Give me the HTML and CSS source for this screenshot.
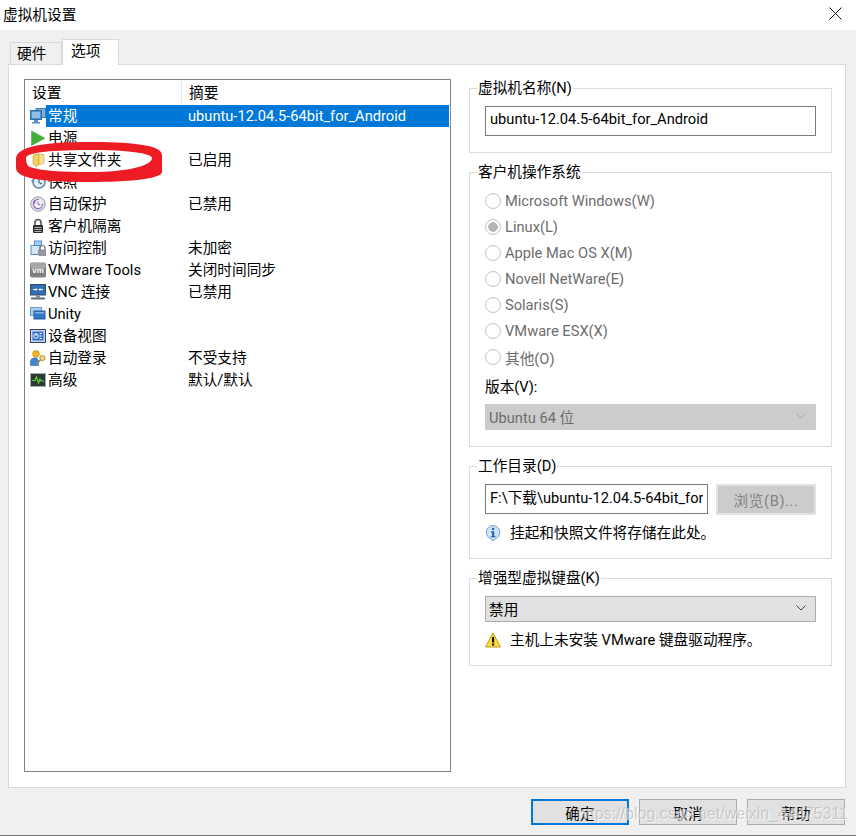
FILE: index.html
```html
<!doctype html>
<html>
    <head>
        <meta charset="utf-8" />
        <title>虚拟机设置</title>
        <link rel="stylesheet" href="styles.css">
    </head>
    <body>
        <div class="window">
            <header class="titlebar">
                <span>虚拟机设置</span>
                <svg class="close-icon" width="13" height="13" viewBox="0 0 13 13">
                    <path d="M0.5 0.5L12.5 12.5M12.5 0.5L0.5 12.5" stroke="#111" stroke-width="1" fill="none" />
                </svg>
            </header>

            <nav class="tabs">
                <div class="tab">硬件</div>
                <div class="tab tab-active">选项</div>
            </nav>

            <main class="pane">
                <!-- Settings list -->
                <section class="settings-list">
                    <div class="list-header">
                        <div class="col-name">设置</div>
                        <div class="col-summary">摘要</div>
                    </div>

                    <div class="row">
                        <svg class="icon" viewBox="0 0 16 16">
                            <rect x="6" y="0.5" width="9.5" height="9" fill="#7fb0dc" stroke="#3f78b0" />
                            <rect x="0.5" y="2.5" width="11" height="9" fill="#4f93d2" stroke="#2f6aa5" />
                            <rect x="2" y="4" width="8" height="6" fill="#8cc0ea" />
                            <path d="M4 12h4v2h2v1.5H2V14h2z" fill="#5b8fbf" />
                        </svg>
                        <div class="row-main is-selected">
                            <div class="cell-name">常规</div>
                            <div class="cell-summary">ubuntu-12.04.5-64bit_for_Android</div>
                        </div>
                    </div>
                    <div class="row">
                        <svg class="icon" viewBox="0 0 16 16">
                            <path d="M1.5 1V15.5L15 8.2z" fill="#3fb13a" stroke="#5f9f58" stroke-width="0.6" />
                        </svg>
                        <div class="row-main">
                            <div class="cell-name">电源</div>
                        </div>
                    </div>
                    <div class="row">
                        <svg class="icon" viewBox="0 0 16 16">
                            <path d="M3 3L9 1.5V12L6.5 15L3 12z" fill="#f3cf62" stroke="#c9a23c" stroke-width="0.6" />
                            <path d="M9 2.5H14V11L9 13z" fill="#fae08c" stroke="#c9a23c" stroke-width="0.6" />
                        </svg>
                        <div class="row-main">
                            <div class="cell-name">共享文件夹</div>
                            <div class="cell-summary">已启用</div>
                        </div>
                    </div>
                    <div class="row">
                        <svg class="icon" viewBox="0 0 16 16">
                            <path d="M1 7L6 2L6 12z" fill="#6f9cc4" />
                            <circle cx="9" cy="8" r="6" fill="#e3edf5" stroke="#5b7f9f" stroke-width="1.4" />
                            <path d="M9 4.5V8.5L12 10" stroke="#39658c" stroke-width="1.2" fill="none" />
                        </svg>
                        <div class="row-main">
                            <div class="cell-name">快照</div>
                        </div>
                    </div>
                    <div class="row">
                        <svg class="icon" viewBox="0 0 16 16">
                            <circle cx="8" cy="8" r="7.2" fill="#e6e4ea" stroke="#9a98a2" />
                            <circle cx="8" cy="8" r="4.6" fill="#f4f2f8" stroke="#8f6fc0" stroke-width="1.2" stroke-dasharray="22 6" />
                            <path d="M2.8 5.5L6 4.5L5 8z" fill="#8f6fc0" />
                            <path d="M8 5.5V8.5H10.5" stroke="#8f6fc0" fill="none" />
                        </svg>
                        <div class="row-main">
                            <div class="cell-name">自动保护</div>
                            <div class="cell-summary">已禁用</div>
                        </div>
                    </div>
                    <div class="row">
                        <svg class="icon" viewBox="0 0 16 16">
                            <path d="M5 7V4.5a3 3 0 0 1 6 0V7" fill="none" stroke="#555" stroke-width="1.6" />
                            <rect x="3" y="7" width="10" height="8" rx="1" fill="#2f2f2f" />
                            <path d="M4.5 9.5h7M4.5 11.5h7M4.5 13.5h7" stroke="#d8d8d8" stroke-width="0.8" />
                        </svg>
                        <div class="row-main">
                            <div class="cell-name">客户机隔离</div>
                        </div>
                    </div>
                    <div class="row">
                        <svg class="icon" viewBox="0 0 16 16">
                            <rect x="4.5" y="1" width="7" height="5" fill="#a9cdee" stroke="#4f8fc8" />
                            <rect x="1" y="5.5" width="9" height="9" fill="#d2e5f6" stroke="#4f8fc8" />
                            <path d="M10 10V8a2.5 2.5 0 0 1 5 0v2" fill="none" stroke="#777" stroke-width="1.2" />
                            <rect x="8.5" y="10" width="7.5" height="5.5" rx="0.5" fill="#9a9a9a" stroke="#666" stroke-width="0.5" />
                        </svg>
                        <div class="row-main">
                            <div class="cell-name">访问控制</div>
                            <div class="cell-summary">未加密</div>
                        </div>
                    </div>
                    <div class="row">
                        <svg class="icon" viewBox="0 0 16 16">
                            <rect x="0" y="0.5" width="16" height="15" rx="2" fill="#808080" />
                            <rect x="0.5" y="1" width="15" height="6" rx="2" fill="#a8a8a8" />
                            <text class="vm-glyph" x="8" y="11" text-anchor="middle">vm</text>
                        </svg>
                        <div class="row-main">
                            <div class="cell-name">VMware Tools</div>
                            <div class="cell-summary">关闭时间同步</div>
                        </div>
                    </div>
                    <div class="row">
                        <svg class="icon" viewBox="0 0 16 16">
                            <rect x="0.5" y="0.5" width="15" height="10.5" fill="#2f6fb8" stroke="#3a4a60" />
                            <path d="M3 5.5H7M9 5.5H13" stroke="#fff" />
                            <path d="M5.5 4L7 5.5L5.5 7M10.5 4L9 5.5L10.5 7" stroke="#fff" fill="none" stroke-width="0.7" />
                            <path d="M6 11.5h4v2H6z" fill="#7f8a99" />
                            <path d="M1 13.5h14v2H1z" fill="#5a6c84" />
                        </svg>
                        <div class="row-main">
                            <div class="cell-name">VNC 连接</div>
                            <div class="cell-summary">已禁用</div>
                        </div>
                    </div>
                    <div class="row">
                        <svg class="icon" viewBox="0 0 16 16">
                            <rect x="0.5" y="1.5" width="11" height="8" fill="#a9cdee" stroke="#6f9cc4" />
                            <rect x="4" y="5" width="11" height="8" fill="#2f78c8" stroke="#2a5f9f" />
                            <rect x="5" y="6" width="9" height="1.5" fill="#7fb5ea" />
                        </svg>
                        <div class="row-main">
                            <div class="cell-name">Unity</div>
                        </div>
                    </div>
                    <div class="row">
                        <svg class="icon" viewBox="0 0 16 16">
                            <rect x="0.5" y="1.5" width="15" height="13" fill="#cfd8e6" stroke="#33415c" />
                            <rect x="2.5" y="3.5" width="11" height="9" fill="#2f6fd0" />
                            <circle cx="6" cy="8" r="2.3" fill="none" stroke="#fff" />
                            <path d="M6 5.5V8M9.5 5.5H12M9.5 8H12M9.5 10.5H12" stroke="#fff" />
                        </svg>
                        <div class="row-main">
                            <div class="cell-name">设备视图</div>
                        </div>
                    </div>
                    <div class="row">
                        <svg class="icon" viewBox="0 0 16 16">
                            <circle cx="6" cy="4" r="3.4" fill="#f2b31e" stroke="#c08a12" stroke-width="0.6" />
                            <path d="M0.5 15.5V11a4 4 0 0 1 4-3h2l2 2.5V15.5z" fill="#3f86d6" stroke="#2a5f9f" stroke-width="0.6" />
                            <circle cx="12.5" cy="8" r="2.6" fill="#f0d78c" stroke="#a88a3c" />
                            <path d="M10.5 10L6.5 14" stroke="#a88a3c" stroke-width="1.6" />
                        </svg>
                        <div class="row-main">
                            <div class="cell-name">自动登录</div>
                            <div class="cell-summary">不受支持</div>
                        </div>
                    </div>
                    <div class="row">
                        <svg class="icon" viewBox="0 0 16 16">
                            <rect x="0.5" y="1.5" width="15" height="13" fill="#2c3a33" stroke="#9fb0b8" />
                            <path d="M2 8.5H5L6.5 5L8.5 11L10 7L11 9H14" fill="none" stroke="#63d23a" stroke-width="1.2" />
                        </svg>
                        <div class="row-main">
                            <div class="cell-name">高级</div>
                            <div class="cell-summary">默认/默认</div>
                        </div>
                    </div>
                </section>

                <!-- Right side options -->
                <section class="options">
                    <fieldset class="group group-name">
                        <legend>虚拟机名称(N)</legend>
                        <input class="text-input" type="text" value="ubuntu-12.04.5-64bit_for_Android" />
                    </fieldset>

                    <fieldset class="group group-os">
                        <legend>客户机操作系统</legend>
                        <div class="radio-list">
                            <label class="radio-row"><input type="radio" name="os" disabled />Microsoft Windows(W)</label>
                            <label class="radio-row"><input type="radio" name="os" checked disabled />Linux(L)</label>
                            <label class="radio-row"><input type="radio" name="os" disabled />Apple Mac OS X(M)</label>
                            <label class="radio-row"><input type="radio" name="os" disabled />Novell NetWare(E)</label>
                            <label class="radio-row"><input type="radio" name="os" disabled />Solaris(S)</label>
                            <label class="radio-row"><input type="radio" name="os" disabled />VMware ESX(X)</label>
                            <label class="radio-row"><input type="radio" name="os" disabled />其他(O)</label>
                        </div>
                        <div class="field-label">版本(V):</div>
                        <div class="select select-disabled">
                            <span>Ubuntu 64 位</span>
                            <svg width="10" height="6" viewBox="0 0 10 6">
                                <path d="M0.5 0.5L5 5L9.5 0.5" fill="none" stroke="#a8a8a8" />
                            </svg>
                        </div>
                    </fieldset>

                    <fieldset class="group group-dir">
                        <legend>工作目录(D)</legend>
                        <div class="dir-row">
                            <input class="text-input" type="text" value="F:\下载\ubuntu-12.04.5-64bit_for_Android" />
                            <button class="browse-button" type="button" disabled>浏览(B)...</button>
                        </div>
                        <div class="note">
                            <svg class="note-icon" viewBox="0 0 16 16">
                                <path d="M8 0.5a6.8 6.8 0 0 1 2 13.3L8 16L6.5 13.9A6.8 6.8 0 0 1 8 0.5z" fill="#cfe3f5" stroke="#6f9fd0" />
                                <rect x="7" y="2.8" width="2.2" height="2.2" fill="#1f5fb0" />
                                <path d="M6 6.3H9.2V11H10.4V12.2H6V11H7.1V7.5H6z" fill="#1f5fb0" />
                            </svg>
                            <span>挂起和快照文件将存储在此处。</span>
                        </div>
                    </fieldset>

                    <fieldset class="group group-keyboard">
                        <legend>增强型虚拟键盘(K)</legend>
                        <div class="select">
                            <span>禁用</span>
                            <svg width="10" height="6" viewBox="0 0 10 6">
                                <path d="M0.5 0.5L5 5L9.5 0.5" fill="none" stroke="#444" />
                            </svg>
                        </div>
                        <div class="note">
                            <svg class="note-icon" viewBox="0 0 16 16">
                                <path d="M8 1L15.5 15H0.5z" fill="#fbdc3c" stroke="#b89a20" stroke-linejoin="round" />
                                <rect x="7" y="5" width="2.2" height="5.5" fill="#111" />
                                <rect x="7" y="11.5" width="2.2" height="2" fill="#111" />
                            </svg>
                            <span>主机上未安装 VMware 键盘驱动程序。</span>
                        </div>
                    </fieldset>
                </section>
            </main>

            <footer class="footer">
                <button class="button button-default" type="button">确定</button>
                <button class="button" type="button">取消</button>
                <button class="button" type="button">帮助</button>
            </footer>

            <!-- Red marker drawn over the screenshot -->
            <svg class="marker" width="146" height="41" viewBox="0 0 146 41">
                <path fill="#ed1c24" fill-rule="evenodd" d="M0 18C0 4 35 1 73 1C110 1 146 3 146 14L146 31C146 38 110 41 75 41C35 41 0 39 0 27ZM10 17C10 11 40 9 75 9C110 9 136 12 136 17C136 25 110 31 75 31C45 31 25 30 14 26C11 25 10 21 10 17Z" />
            </svg>

            <div class="watermark">https://blog.csdn.net/weixin_44475311</div>
        </div>
    </body>
</html>
```

FILE: styles.css
```css
body {
    margin: 0;
}

.window {
    position: relative;
    width: 856px;
    height: 836px;
    box-sizing: border-box;
    display: flex;
    flex-direction: column;
    overflow: hidden;
    background: #f0f0f0;
    border-bottom: 1px solid #777;
    color: #000;
    font-family: Roboto, "Noto Sans CJK SC", sans-serif;
    font-size: 14.67px;
}

.titlebar {
    height: 30px;
    flex: none;
    display: flex;
    align-items: center;
    justify-content: space-between;
    padding: 0 14px 3px 3px;
    box-sizing: border-box;
    background: #fff;
}

.tabs {
    height: 34px;
    flex: none;
    display: flex;
    align-items: flex-end;
    padding-left: 10px;
}

.tab {
    width: 52px;
    height: 22px;
    box-sizing: border-box;
    padding-left: 6px;
    border: 1px solid #d9d9d9;
    border-bottom: none;
    line-height: 22px;
}

.tab-active {
    position: relative;
    width: 57px;
    height: 26px;
    margin-bottom: -1px;
    padding-left: 8px;
    background: #fff;
    line-height: 22px;
}

.pane {
    width: 838px;
    height: 724px;
    flex: none;
    box-sizing: border-box;
    margin-left: 8px;
    padding: 14px 13px 0 15px;
    display: flex;
    gap: 18px;
    background: #fff;
    border: 1px solid #d9d9d9;
}

.settings-list {
    width: 427px;
    height: 693px;
    flex: none;
    box-sizing: border-box;
    border: 1px solid #82828a;
}

.list-header {
    height: 25px;
    display: flex;
    line-height: 26px;
}

.col-name {
    width: 157px;
    box-sizing: border-box;
    padding-left: 7px;
    border-right: 1px solid #e5e5e5;
}

.col-summary {
    padding-left: 7px;
}

.row {
    height: 22px;
    display: flex;
    align-items: center;
    padding-left: 5px;
}

.icon {
    width: 16px;
    height: 16px;
    flex: none;
}

.row-main {
    flex: 1;
    height: 22px;
    display: flex;
    margin-right: 1px;
    line-height: 22px;
}

.is-selected {
    background: #0078d7;
    color: #fff;
}

.cell-name {
    width: 142px;
    flex: none;
    box-sizing: border-box;
    padding-left: 2px;
}

.vm-glyph {
    fill: #fff;
    font-family: "Liberation Sans", sans-serif;
    font-size: 8px;
    font-weight: bold;
}

.options {
    width: 363px;
    flex: none;
    display: flex;
    flex-direction: column;
    gap: 10px;
}

.group {
    margin: 0;
    padding: 0 15px;
    min-width: 0;
    border: 1px solid #dcdcdc;
}

.group legend {
    height: 18px;
    margin-left: -8px;
    padding: 0 1px;
    line-height: 18px;
}

.group-name {
    padding-top: 9px;
    padding-bottom: 16px;
}

.group-os {
    padding-top: 7px;
    padding-bottom: 16px;
}

.group-dir {
    padding-top: 9px;
    padding-bottom: 15px;
}

.group-keyboard {
    padding-top: 9px;
    padding-bottom: 15px;
}

.text-input {
    width: 100%;
    height: 30px;
    box-sizing: border-box;
    margin: 0;
    padding: 0 4px 5px;
    border: 1px solid #7a7a7a;
    border-radius: 0;
    background: #fff;
    color: #000;
    font: inherit;
    outline: none;
}

.radio-row {
    height: 26px;
    display: flex;
    align-items: center;
    gap: 4px;
    color: #6d6d6d;
}

.radio-row input {
    appearance: none;
    width: 16px;
    height: 16px;
    box-sizing: border-box;
    flex: none;
    margin: 0;
    border: 1px solid #c4c4c4;
    border-radius: 50%;
    background: #fff;
}

.radio-row input:checked {
    background: radial-gradient(circle, #b4b4b4 0 4.5px, #fff 5px);
}

.field-label {
    height: 18px;
    margin-top: 8px;
    line-height: 18px;
}

.select {
    height: 26px;
    box-sizing: border-box;
    margin-top: 8px;
    display: flex;
    align-items: center;
    justify-content: space-between;
    padding: 0 9px 2px 3px;
    border: 1px solid #adadad;
    background: #e1e1e1;
}

.group-keyboard .select {
    margin-top: 0;
}

.select-disabled {
    border-color: #cccccc;
    background: #cccccc;
    color: #6d6d6d;
}

.dir-row {
    display: flex;
    gap: 8px;
}

.dir-row .text-input {
    width: 223px;
    flex: none;
}

.browse-button {
    width: 100px;
    height: 31px;
    box-sizing: border-box;
    margin: 0;
    padding: 0;
    border: 2px solid #e3e3e3;
    border-radius: 0;
    background: #cccccc;
    color: #838383;
    font: inherit;
    letter-spacing: 0.6px;
}

.note {
    height: 20px;
    margin-top: 8px;
    display: flex;
    align-items: center;
    gap: 9px;
    line-height: 20px;
}

.note-icon {
    width: 16px;
    height: 16px;
    flex: none;
}

.footer {
    display: flex;
    justify-content: flex-end;
    gap: 10px;
    padding: 11px 11px 0 0;
}

.button {
    width: 98px;
    height: 26px;
    box-sizing: border-box;
    margin: 0;
    padding: 0;
    border: 1px solid #adadad;
    border-radius: 0;
    background: #e1e1e1;
    color: #000;
    font: inherit;
}

.button-default {
    border: 2px solid #0078d7;
}

.marker {
    position: absolute;
    left: 16px;
    top: 141px;
}

.watermark {
    position: absolute;
    left: 577px;
    top: 805px;
    width: 270px;
    overflow: hidden;
    white-space: nowrap;
    color: rgba(170, 170, 170, 0.55);
    font-family: "Liberation Sans", sans-serif;
    font-size: 16px;
    text-shadow: 1px 1px 1px rgba(255, 255, 255, 0.8);
}
```
